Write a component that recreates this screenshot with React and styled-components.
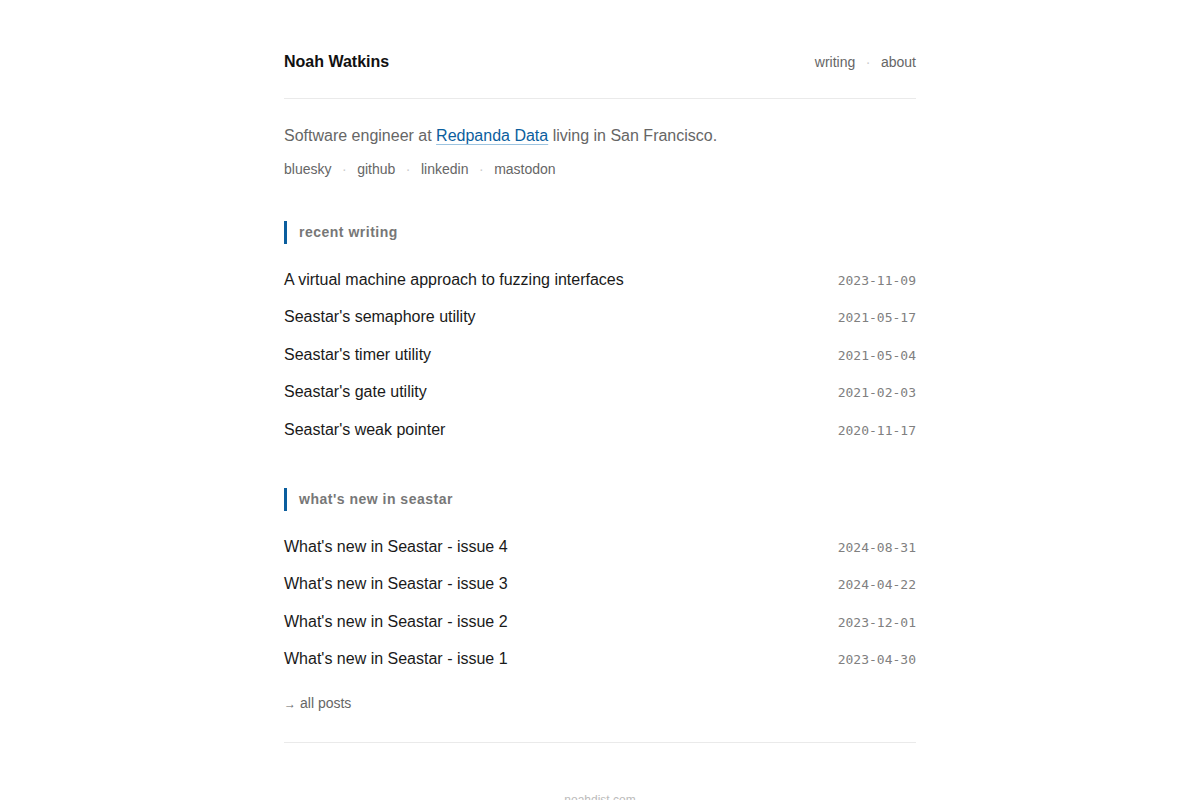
import React from 'react';
import styled, { createGlobalStyle } from 'styled-components';

const GlobalStyle = createGlobalStyle`
  body {
    margin: 0;
    background: #fff;
    font-family: "Liberation Sans", Arial, sans-serif;
    color: #222;
  }
`;

const Page = styled.div`
  max-width: 632px;
  margin: 0 auto;
  padding-top: 50px;
`;

const Header = styled.header`
  display: flex;
  align-items: center;
  justify-content: space-between;
  padding-bottom: 24px;
  border-bottom: 1px solid #eaeaea;
`;

const Name = styled.a`
  font-size: 16px;
  line-height: 24px;
  font-weight: bold;
  color: #111;
  text-decoration: none;
`;

const LinkRow = styled.nav`
  display: flex;
  align-items: center;
  font-size: 14px;
  line-height: 21px;
  margin-top: ${p => p.$top || 0}px;
`;

const PlainLink = styled.a`
  color: #666;
  text-decoration: none;
`;

const Dot = styled.span`
  color: #ccc;
  margin: 0 10.5px;
`;

const Bio = styled.p`
  margin: 24px 0 0;
  font-size: 16px;
  line-height: 25.6px;
  color: #666;
`;

const BioLink = styled.a`
  color: #0b5e9e;
  text-decoration: underline;
  text-decoration-color: #9cc3e0;
  text-underline-offset: 3px;
`;

const Section = styled.section`
  margin-top: ${p => p.$top}px;
`;

const Heading = styled.h2`
  margin: 0 0 17.5px;
  padding-left: 12px;
  border-left: 3px solid #0b5e9e;
  font-size: 14px;
  line-height: 23px;
  font-weight: bold;
  color: #777;
  letter-spacing: 0.5px;
`;

const PostList = styled.ul`
  list-style: none;
  margin: 0;
  padding: 0;
`;

const Post = styled.li`
  display: flex;
  align-items: center;
  justify-content: space-between;
  height: 37.5px;
`;

const PostTitle = styled.a`
  font-size: 16px;
  line-height: 24px;
  color: #1a1a1a;
  text-decoration: none;
`;

const PostDate = styled.time`
  font-family: "DejaVu Sans Mono", "Liberation Mono", monospace;
  font-size: 13px;
  line-height: 20px;
  color: #808080;
  margin-top: 2px;
`;

const AllPosts = styled.a`
  display: block;
  margin-top: 15px;
  font-size: 14px;
  line-height: 21px;
  color: #666;
  text-decoration: none;
`;

const Arrow = styled.span`
  font-size: 12px;
  margin-right: 4px;
`;

const Footer = styled.footer`
  margin-top: 27px;
  border-top: 1px solid #eaeaea;
  padding: 50px 0 20px;
  text-align: center;
  font-size: 12px;
  color: #bbb;
`;

const recent = [
  ['A virtual machine approach to fuzzing interfaces', '2023-11-09'],
  ["Seastar's semaphore utility", '2021-05-17'],
  ["Seastar's timer utility", '2021-05-04'],
  ["Seastar's gate utility", '2021-02-03'],
  ["Seastar's weak pointer", '2020-11-17'],
];

const seastar = [
  ["What's new in Seastar - issue 4", '2024-08-31'],
  ["What's new in Seastar - issue 3", '2024-04-22'],
  ["What's new in Seastar - issue 2", '2023-12-01'],
  ["What's new in Seastar - issue 1", '2023-04-30'],
];

function Links({ items, top }) {
  return (
    <LinkRow $top={top}>
      {items.map((item, i) => (
        <React.Fragment key={item}>
          {i > 0 && <Dot>·</Dot>}
          <PlainLink href="#">{item}</PlainLink>
        </React.Fragment>
      ))}
    </LinkRow>
  );
}

function Posts({ title, posts, top }) {
  return (
    <Section $top={top}>
      <Heading>{title}</Heading>
      <PostList>
        {posts.map(([name, date]) => (
          <Post key={name}>
            <PostTitle href="#">{name}</PostTitle>
            <PostDate>{date}</PostDate>
          </Post>
        ))}
      </PostList>
    </Section>
  );
}

function App() {
  return (
    <>
      <GlobalStyle />
      <Page>
        <Header>
          <Name href="#">Noah Watkins</Name>
          <Links items={['writing', 'about']} />
        </Header>
        <Bio>
          Software engineer at <BioLink href="#">Redpanda Data</BioLink> living in San Francisco.
        </Bio>
        <Links items={['bluesky', 'github', 'linkedin', 'mastodon']} top={10} />
        <Posts title="recent writing" posts={recent} top={41} />
        <Posts title="what's new in seastar" posts={seastar} top={39} />
        <AllPosts href="#"><Arrow>→</Arrow>all posts</AllPosts>
        <Footer>noahdist.com</Footer>
      </Page>
    </>
  );
}

export default App;
